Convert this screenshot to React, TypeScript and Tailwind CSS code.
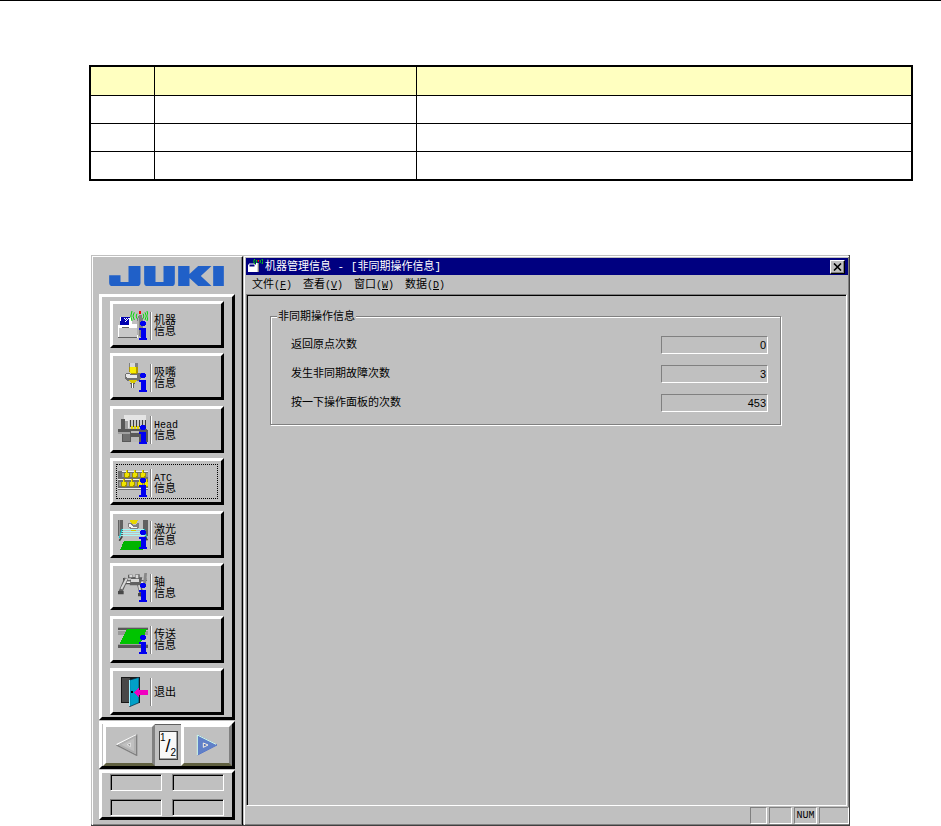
import type { ReactNode } from "react";

const raised = "border-[3px] border-t-white border-l-white border-b-black border-r-black";

function InfoMark() {
  return (
    <g fill="#0000f0">
      <path d="M69 30h12v3h3v9h-3v3H69v-3h-3v-9h3z" />
      <path d="M63 51h21v30h3v6H63v-6h6V57h-6z" />
    </g>
  );
}

function Icon({ children, info = true }: { children: ReactNode; info?: boolean }) {
  return (
    <svg aria-hidden="true" viewBox="0 0 90 90" shapeRendering="crispEdges" className="h-[30px] w-[30px] shrink-0">
      {children}
      {info && <InfoMark />}
    </svg>
  );
}

function MachineIcon() {
  return (
    <Icon>
      <path d="M0 42h6V18h36v22h12l6-6h6v40l-8 8H0z" fill="#fff" />
      <path d="M3 52h54v27H3z" fill="#c8c8c8" />
      <path d="M0 79h58v3H0zM12 49h21v3H12z" fill="#606060" />
      <path d="M9 18h27v3h-3v21H6V30h3z" fill="#0000b0" />
      <path d="M18 21h3v3h-3zM24 21h3v3h-3zM30 21h3v3h-3zM21 24h3v3h-3zM27 24h3v3h-3zM24 27h3v3h-3zM21 30h3v3h-3z" fill="#fff" />
      <path d="M58 21l6-9h7l4 12v46l-8 8-9-6z" fill="#808080" />
      <path d="M58 30v42l4 6V21z" fill="#b0b0b0" />
      <path d="M63 0h6v8h-6z" fill="#f00000" />
      <path shapeRendering="auto" d="M57 8q-5 7 0 15M49 4q-8 11 0 23M42 0q-7 15 0 30M75 8q5 7 0 15M81 4q8 11 0 23M87 0q7 15 0 30" fill="none" stroke="#00d800" strokeWidth="3" />
    </Icon>
  );
}

function NozzleIcon() {
  return (
    <Icon>
      <path d="M33 0h27v12H33z" fill="#808080" /><path d="M36 0h15v12H36z" fill="#d8d8d8" />
      <path d="M33 12h27v15l-6 6H39l-6-6z" fill="#b09800" /><path d="M36 12h18v18H36z" fill="#f8ec00" />
      <path d="M21 33l6-3h6l6 3h15l6-3h9v18l-9 6H30l-9-6z" fill="#707070" />
      <path d="M24 33h9l6 3h18v9H30l-6-3z" fill="#e8e8e8" />
      <path d="M33 51h24l-6 9H39z" fill="#d8c800" />
      <path d="M36 60h15l-3 6v9h-9v-9z" fill="#606060" /><path d="M42 60h3v15h-3z" fill="#fff" />
    </Icon>
  );
}

function HeadIcon() {
  return (
    <Icon>
      <path d="M18 0h66v15h-3v24H18z" fill="#e4e4e4" />
      <path d="M9 12h12v30h63l6 6v32H12V54H0V42h9z" fill="#585858" />
      <path d="M21 18h9v24h-9zM0 51h36v6H0z" fill="#a0a0a0" />
      <path d="M34 15h50v24H34z" fill="#c8c8c8" />
      <path d="M37 15v22M46 15v22M55 15v22M64 15v22M73 15v22M82 15v22" stroke="#404040" strokeWidth="3" />
      <path d="M41 32v9M50 32v9M59 32v9M68 32v9M77 32v9" stroke="#e8d800" strokeWidth="5" />
      <path d="M15 57h21v22H15z" fill="#707070" /><path d="M39 48h24v6H39zM39 66h24v14H39z" fill="#b8b8b8" />
    </Icon>
  );
}

function AtcIcon() {
  const top = [24, 48, 72];
  const bottom = [15, 39, 63, 84];
  return (
    <Icon>
      <path d="M0 9h90v57H0z" fill="#707070" />
      <path d="M12 9h78v3H12zM0 33h90v3H0zM0 60h90v3H0z" fill="#f0f0f0" />
      <path d="M12 15h78v12H12zM3 42h87v12H3z" fill="#989898" />
      {top.map((x) => (
        <g key={x}>
          <path d={`M${x} 6h6v9h6v9l-3 6h-12l-3-6v-9h6z`} fill="#a09000" />
          <path d={`M${x} 6h3v9h6v9h-3l-3 3h-6v-12h3z`} fill="#f0e400" />
        </g>
      ))}
      {bottom.map((x) => (
        <g key={x}>
          <path d={`M${x} 33h6v9h6v9l-3 6h-12l-3-6v-9h6z`} fill="#a09000" />
          <path d={`M${x} 33h3v9h6v9h-3l-3 3h-6v-12h3z`} fill="#f0e400" />
        </g>
      ))}
    </Icon>
  );
}

function LaserIcon() {
  return (
    <Icon>
      <path d="M0 0h15v48H0zM75 0h15v48H75z" fill="#606060" />
      <path d="M3 0h3v48H3z" fill="#909090" />
      <path d="M18 63h66l-9 27H6z" fill="#00b400" />
      <path d="M36 0h24l-6 12H39z" fill="#e8d800" />
      <path d="M30 9h9l6 6h6l6-6h6v12l-9 9H39l-9-9z" fill="#808080" /><path d="M33 12h6l6 9h12v3H42l-9-3z" fill="#f4f4f4" />
      <path d="M39 30h15v3H39z" fill="#d8c800" />
      <g shapeRendering="auto">
        <path d="M12 28.5h66M9 34.5h72M6 40.5h78M6 46.5h78" stroke="#a8f4f4" strokeWidth="3" />
        <path d="M12 27L4 54M79 27l7 27" stroke="#00c8d0" strokeWidth="3" />
        <path d="M13 49L4 62M81 49l7 12" stroke="#404040" strokeWidth="5" />
      </g>
    </Icon>
  );
}

function AxisIcon() {
  return (
    <Icon>
      <g shapeRendering="auto">
        <path d="M15 19h72M21 30h62" stroke="#505050" strokeWidth="8" />
        <path d="M18 18h68M21 28h58" stroke="#f0f0f0" strokeWidth="4" />
        <path d="M25 16L7 58M62 29l10 40" stroke="#606060" strokeWidth="12" />
        <path d="M26 17L10 48M62 31l5 24" stroke="#d8d8d8" strokeWidth="6" />
        <path d="M30 5h14v7h8V4h13v9h8l-6 24H35l4-21h-9z" fill="#606060" />
        <path d="M34 6h9v7h-9zM53 5h8v11h-8zM39 18h24v9H39z" fill="#d8d8d8" />
        <path d="M79 0h8l-3 32h-9z" fill="#888" /><path d="M0 54h17v10H0zM60 60h15v10H60z" fill="#484848" />
      </g>
    </Icon>
  );
}

function ConveyorIcon() {
  return (
    <Icon>
      <path d="M0 6h90v9H0zM0 59h90v9H0z" fill="#585858" />
      <path d="M0 6h90v3H0zM0 56h90v3H0z" fill="#a0a0a0" />
      <path d="M0 19h90v10H0z" fill="#999" />
      <path d="M27 13h60L66 57H5z" fill="#00c400" />
    </Icon>
  );
}

function ExitIcon() {
  return (
    <Icon info={false}>
      <path d="M9 0h56v78H9z" fill="#181818" /><path d="M12 3h23v72H12z" fill="#484848" />
      <path shapeRendering="auto" d="M35 9L63 1v76L35 89z" fill="#00a0c8" stroke="#102030" strokeWidth="2" />
      <path d="M35 10v78" stroke="#a0f0ff" strokeWidth="3" />
      <path d="M39 42h6v6h-6z" fill="#000" />
      <path d="M48 45l15-15v9h27v15H63v9z" fill="#f000c0" />
    </Icon>
  );
}

const sideItems: { lines: string[]; icon: ReactNode; focused?: boolean }[] = [
  { lines: ["机器", "信息"], icon: <MachineIcon /> },
  { lines: ["吸嘴", "信息"], icon: <NozzleIcon /> },
  { lines: ["Head", "信息"], icon: <HeadIcon /> },
  { lines: ["ATC", "信息"], icon: <AtcIcon />, focused: true },
  { lines: ["激光", "信息"], icon: <LaserIcon /> },
  { lines: ["轴", "信息"], icon: <AxisIcon /> },
  { lines: ["传送", "信息"], icon: <ConveyorIcon /> },
  { lines: ["退出"], icon: <ExitIcon /> },
];

const menus = [
  { label: "文件", hotkey: "F" },
  { label: "查看", hotkey: "V" },
  { label: "窗口", hotkey: "W" },
  { label: "数据", hotkey: "D" },
];

const counters = [
  { id: "origin", label: "返回原点次数", value: "0" },
  { id: "fault", label: "发生非同期故障次数", value: "3" },
  { id: "panel", label: "按一下操作面板的次数", value: "453" },
];

function Logo() {
  return (
    <svg role="img" aria-label="JUKI" viewBox="0 0 344 60" className="block h-5 w-[115px]" fill="#2060c8">
      <path d="M0 28h34v20h24V0h36v50q0 10-10 10H10Q0 60 0 50z" />
      <path d="M105 0h34v48h24V0h34v50q0 10-10 10h-72q-10 0-10-10z" />
      <path d="M207 0h34v24L267 0h40l-32 30 32 30h-40l-26-24v24h-34z" />
      <path d="M312 0h32v60h-32z" />
    </svg>
  );
}

function Sidebar() {
  return (
    <aside className="flex w-[151px] shrink-0 flex-col border-t border-r border-l border-t-white border-r-black border-l-white pt-[9px] pr-[7px] pb-[5px] pl-[6px] shadow-[inset_-1px_0_#808080]">
      <div className="pl-2.5">
        <Logo />
      </div>
      <nav className={`mt-2 flex h-[426px] flex-col justify-between px-2 pt-1 pb-0.5 ${raised}`}>
        {sideItems.map((item) => (
          <button key={item.lines.join()} type="button" className={`relative flex h-[47px] items-center pt-0.5 pl-[5px] text-left ${raised}`}>
            {item.icon}
            <span className="ml-0.5 h-7 w-[2px] border-r border-l border-r-white border-l-[#808080]" />
            <span className="ml-[2px] flex flex-col pt-0.5 text-[11px] leading-[11px]">
              {item.lines.map((line) => (
                <span key={line} className={line.charCodeAt(0) < 128 ? "text-[10px]" : ""}>{line}</span>
              ))}
            </span>
            {item.focused && <span className="absolute inset-[3px] border border-dotted border-black" />}
          </button>
        ))}
      </nav>
      <div className={`mt-px flex h-12 items-stretch ${raised}`}>
        <button type="button" aria-label="上一页" className="ml-px flex w-[52px] items-center justify-center border-[3px] border-t-white border-r-[#808080] border-b-[#606040] border-l-white pr-1">
          <svg aria-hidden="true" viewBox="0 0 66 66" className="h-[22px] w-[22px]" fill="none">
            <path d="M4 34L62 4v60z" stroke="#808080" strokeWidth="4" />
            <path d="M2 32L60 3" stroke="#fff" strokeWidth="4" />
            <path d="M10 32L57 8v48z" stroke="#b0b0b0" strokeWidth="5" />
            <path d="M34 32l9-5v11z" fill="#888" stroke="#fff" strokeWidth="2" />
          </svg>
        </button>
        <div className="flex grow items-center justify-center border-t border-[#606060]">
          <div className="flex h-[29px] w-[19px] justify-center border border-[#404040] bg-[#f8f8f8] font-['Liberation_Sans',sans-serif] text-[10px] leading-3 shadow-[inset_-1px_-1px_#a0a0a0]">
            <span className="self-start">1</span>
            <span className="self-center text-lg leading-5">/</span>
            <span className="self-end">2</span>
          </div>
        </div>
        <button type="button" aria-label="下一页" className="flex w-[51px] items-center justify-center border-[3px] border-t-white border-r-[#808080] border-b-[#606040] border-l-white">
          <svg aria-hidden="true" viewBox="0 0 66 66" className="h-[22px] w-[22px]">
            <path d="M5 3l58 30L5 63z" fill="#6080c8" stroke="#5878c8" strokeWidth="3" />
            <path d="M4 63V3l56 28" fill="none" stroke="#d8ffe8" strokeWidth="3" />
            <path d="M22 27l14 6-14 7z" fill="#5070c0" stroke="#f8f0e0" strokeWidth="3" />
          </svg>
        </button>
      </div>
      <div className={`mt-px grid h-[50px] grid-cols-2 gap-x-2.5 gap-y-2 px-2 py-px ${raised}`}>
        {[0, 1, 2, 3].map((n) => (
          <div key={n} className="h-[17px] border border-t-[#808080] border-r-white border-b-white border-l-[#808080] shadow-[inset_1px_1px_#000]" />
        ))}
      </div>
    </aside>
  );
}

function TitleIcon() {
  return (
    <svg aria-hidden="true" viewBox="0 0 48 45" className="h-[15px] w-4">
      <path d="M3 18h24v-6h9v27H3z" fill="#fff" />
      <path d="M6 15h18v9H6z" fill="#000080" stroke="#fff" strokeWidth="3" />
      <path d="M32 12h4v27h-4z" fill="#808080" />
      <path d="M23 0q-6 7 0 15M29 3q-3 4 0 9M39 3q3 4 0 9M45 0q6 7 0 15" fill="none" stroke="#00e000" strokeWidth="3" />
      <path d="M32 3h4v5h-4z" fill="#f00" />
    </svg>
  );
}

export default function App() {
  const cell = "border-r border-b border-black p-0 last:border-r-0";
  return (
    <div className="border-t border-black bg-white text-black">
      <div className="mt-16 mr-7 ml-[89px]">
        <table className="w-full table-fixed border-separate border-spacing-0 border-2 border-black">
          <colgroup>
            <col className="w-16" />
            <col className="w-[262px]" />
            <col />
          </colgroup>
          <thead>
            <tr className="h-[29px] bg-[#ffffc0]">
              <th className={cell} /><th className={cell} /><th className={cell} />
            </tr>
          </thead>
          <tbody>
            <tr className="h-7"><td className={cell} /><td className={cell} /><td className={cell} /></tr>
            <tr className="h-7"><td className={cell} /><td className={cell} /><td className={cell} /></tr>
            <tr className="h-[27px]">
              <td className="border-r border-black p-0" /><td className="border-r border-black p-0" /><td className="p-0" />
            </tr>
          </tbody>
        </table>
      </div>

      <div className="mx-[91px] mt-[74px] flex border-r border-b border-[#404040] bg-[#c0c0c0] pt-px pl-px font-['Liberation_Mono','Noto_Sans_CJK_SC',monospace] text-[11px] shadow-[inset_-1px_-1px_#808080]">
        <Sidebar />
        <main className="ml-px flex min-w-0 grow flex-col border-t border-l border-white pt-px pl-px">
          <header className="mr-px flex h-[17px] items-center bg-[#000080] pr-[3px] pl-px text-white">
            <TitleIcon />
            <h1 className="ml-0.5 grow whitespace-pre pt-px leading-4">机器管理信息 - [非同期操作信息]</h1>
            <button type="button" aria-label="关闭" className="flex h-3.5 w-[15px] items-center justify-center border border-t-white border-r-black border-b-black border-l-white bg-[#c0c0c0] shadow-[inset_-1px_-1px_#808080]">
              <svg aria-hidden="true" viewBox="0 0 9 8" className="h-2 w-[9px]">
                <path d="M1 .5l7 7M8 .5l-7 7" stroke="#000" strokeWidth="1.6" />
              </svg>
            </button>
          </header>
          <div className="flex h-[19px] items-center pt-0.5 pl-1.5">
            {menus.map((m) => (
              <button key={m.hotkey} type="button" className="w-[51px] whitespace-nowrap text-left leading-4">
                {m.label}<span className="text-[10px]">(<u>{m.hotkey}</u>)</span>
              </button>
            ))}
          </div>
          <section className="mr-0.5 grow border border-t-[#808080] border-r-white border-b-white border-l-[#808080] pt-3.5 pr-[65px] pl-[23px] shadow-[inset_1px_1px_#000]">
            <fieldset className="border border-[#808080] pt-[13px] pr-3 pb-3 pl-5 shadow-[inset_1px_1px_#fff,1px_1px_#fff]">
              <legend className="-ml-[14px] bg-[#c0c0c0] px-[1px] pt-0.5 leading-3">非同期操作信息</legend>
              <div className="flex flex-col gap-[11px]">
                {counters.map((c) => (
                  <div key={c.id} className="flex h-[18px] items-center justify-between">
                    <label htmlFor={c.id} className="pt-px">{c.label}</label>
                    <input
                      id={c.id}
                      readOnly
                      value={c.value}
                      className="h-[18px] w-[107px] border border-t-[#808080] border-r-white border-b-white border-l-[#808080] bg-transparent pr-px text-right font-['Liberation_Sans',sans-serif] text-[11px] outline-none"
                    />
                  </div>
                ))}
              </div>
            </fieldset>
          </section>
          <footer className="flex h-[19px] justify-end gap-0.5 pt-px pb-px">
            <span className="w-[17px] border border-t-[#808080] border-r-white border-b-white border-l-[#808080]" />
            <span className="w-[23px] border border-t-[#808080] border-r-white border-b-white border-l-[#808080]" />
            <span className="w-[23px] border border-t-[#808080] border-r-white border-b-white border-l-[#808080] text-center text-[10px] leading-[15px]">NUM</span>
            <span className="w-[30px] border border-t-[#808080] border-r-white border-b-white border-l-[#808080]" />
          </footer>
        </main>
      </div>
    </div>
  );
}
